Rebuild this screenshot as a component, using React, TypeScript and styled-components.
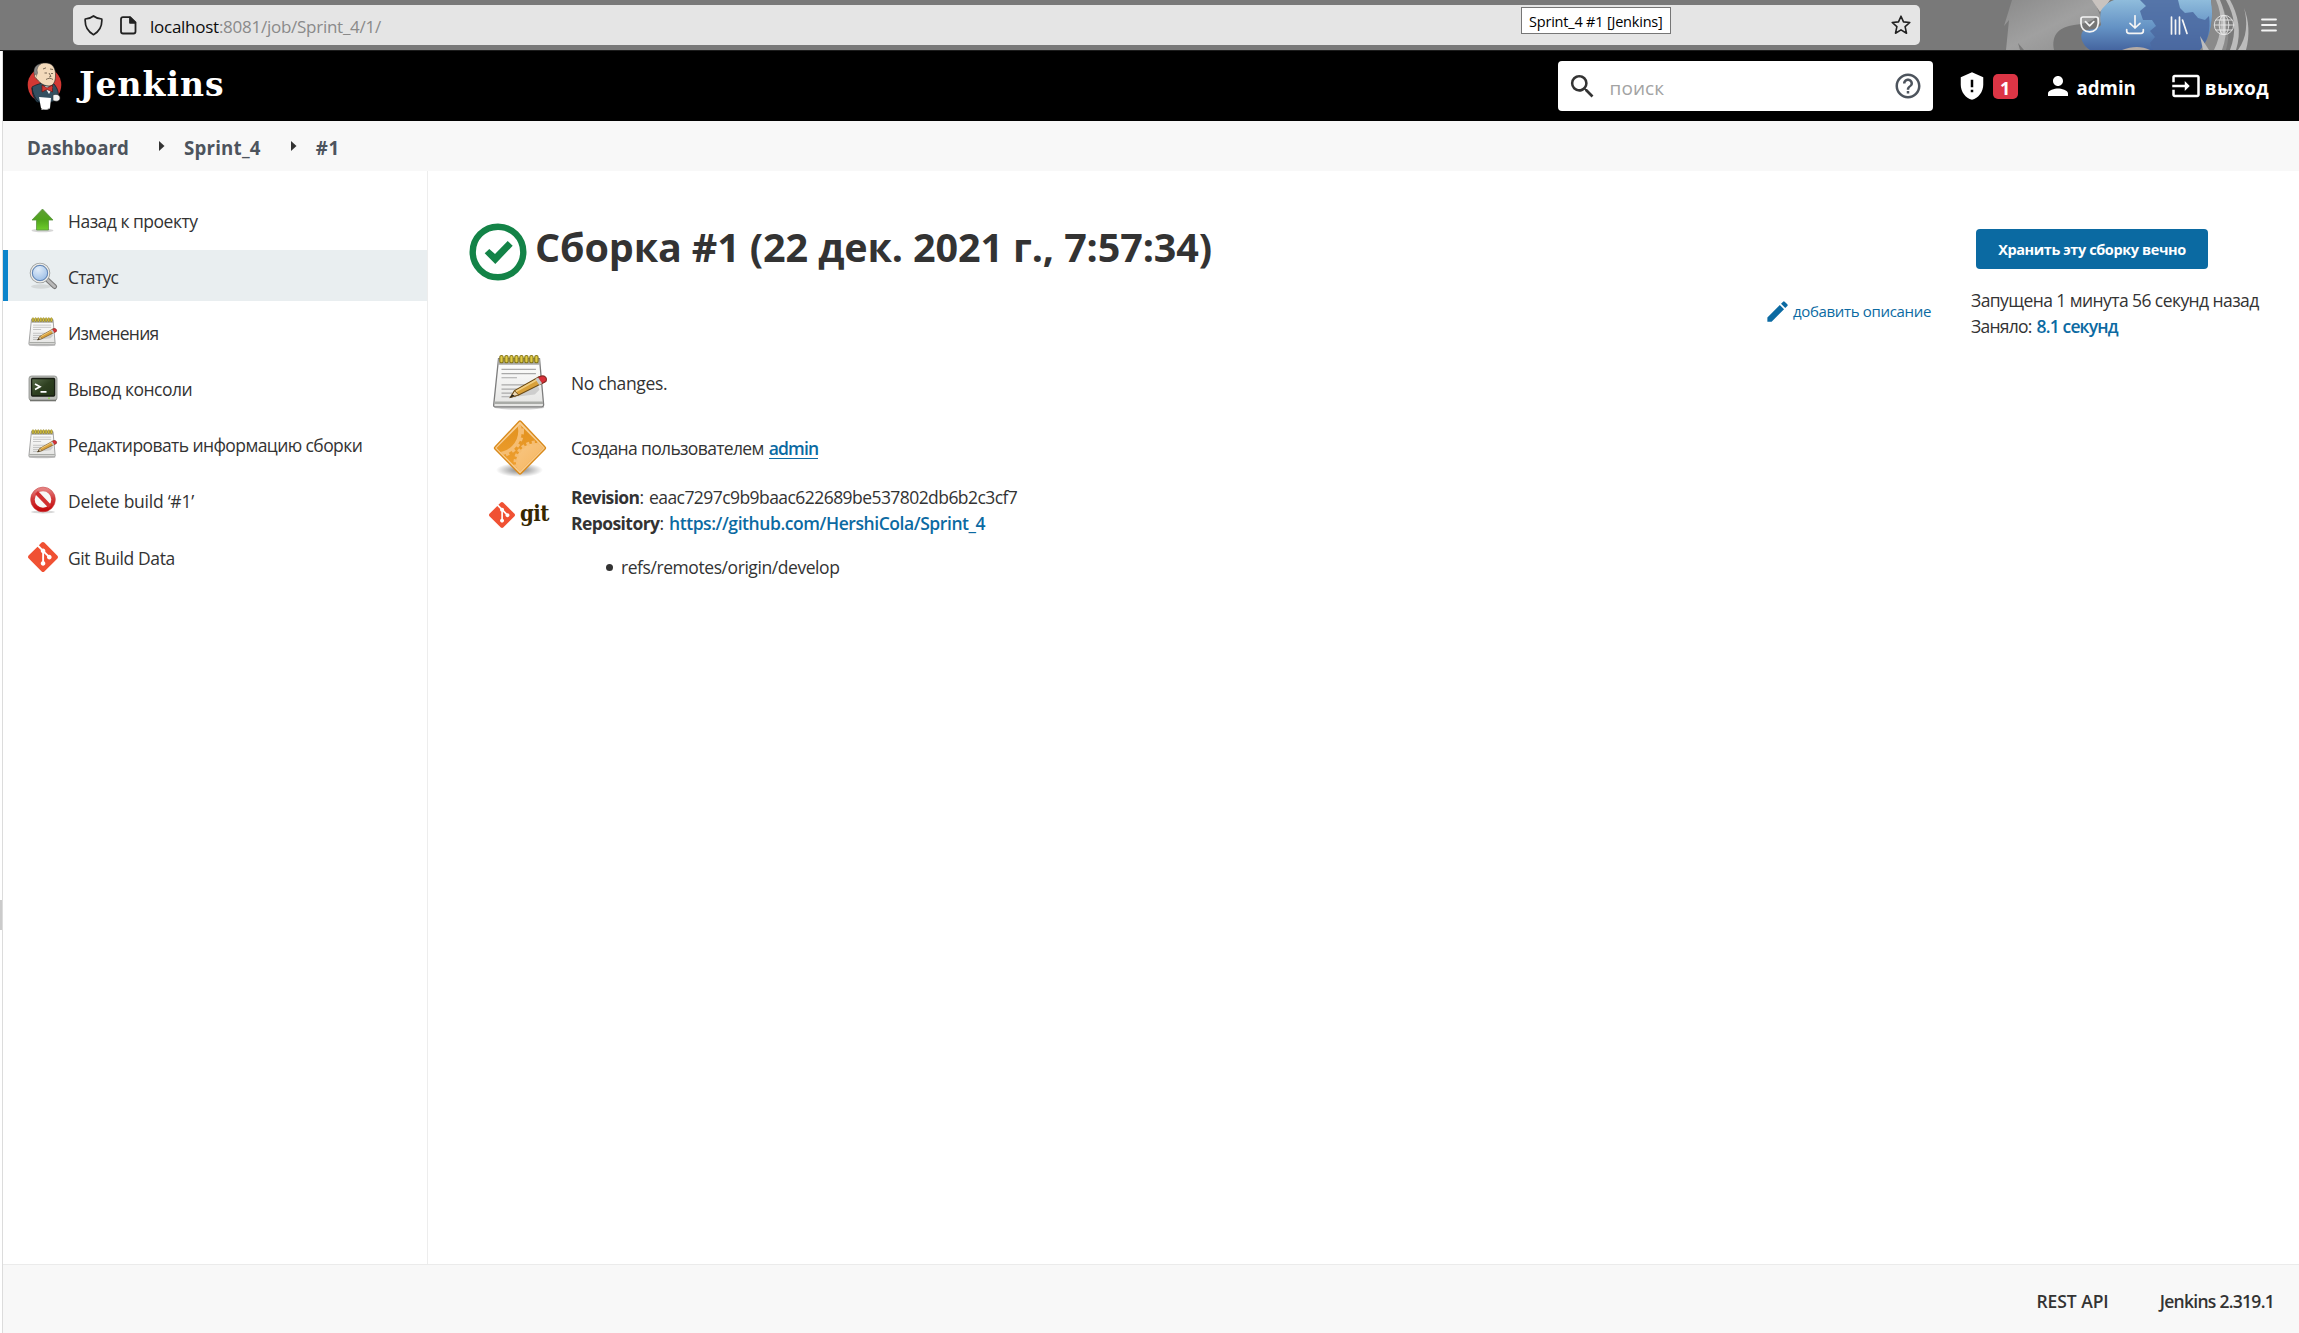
import React from "react";
import styled, { createGlobalStyle, css } from "styled-components";
import { SiGit } from "react-icons/si";

const Global = createGlobalStyle`
  *, *::before, *::after { box-sizing: border-box; }
  body {
    margin: 0;
    background: #fff;
    color: #333;
    font: 400 17.5px/26px "Open Sans", "Noto Sans", sans-serif;
  }
  svg { display: block; flex: none; }
`;

const Page = styled.div`
  width: 2299px;
  height: 1333px;
  display: flex;
  flex-direction: column;
  overflow: hidden;
`;

const Text = styled.span<{ $ls?: number }>`
  white-space: nowrap;
  letter-spacing: ${(p) => p.$ls ?? 0}px;
`;

/* ---------- browser chrome ---------- */

const Chrome = styled.header`
  position: relative;
  flex: none;
  height: 51px;
  display: flex;
  align-items: flex-start;
  padding: 5px 21px 0 73px;
  background: #797979;
  border-bottom: 1px solid #1c1c1c;
`;

const ThemeArt = styled.svg`
  position: absolute;
  left: 1990px;
  top: 0;
`;

const AddressBar = styled.div`
  width: 1847px;
  height: 40px;
  display: flex;
  align-items: center;
  padding: 0 9px 0 11px;
  background: #e5e5e5;
  border-radius: 5px;
`;

const Url = styled(Text)`
  margin: 4px auto 0 13px;
  font-size: 17px;
  color: #8a8a8a;
  b { font-weight: 400; color: #0c0c0d; }
`;

const PageIcon = styled.svg`
  margin-left: 17px;
`;

const Tooltip = styled.div`
  position: absolute;
  left: 1521px;
  top: 7px;
  width: 150px;
  height: 27px;
  display: flex;
  align-items: center;
  padding: 4px 0 2px 7px;
  background: #fff;
  border: 1px solid #767676;
  color: #000;
  font-size: 14.5px;
  line-height: 20px;
`;

const ChromeTools = styled.div`
  position: relative;
  margin-left: auto;
  height: 40px;
  display: flex;
  align-items: center;
  gap: 25px;
  color: #f4f4f4;
`;

/* ---------- Jenkins header ---------- */

const Body = styled.div`
  flex: 1;
  display: flex;
  min-height: 0;
`;

const WindowEdge = styled.div`
  flex: none;
  width: 3px;
  display: flex;
  border-right: 1px solid #dcdcdc;
  padding-top: 849px;
`;

const EdgeHandle = styled.div`
  width: 2px;
  height: 30px;
  background: #cbcbcb;
`;

const Jenkins = styled.div`
  flex: 1;
  display: flex;
  flex-direction: column;
  min-width: 0;
`;

const Header = styled.div`
  flex: none;
  height: 70px;
  display: flex;
  align-items: center;
  padding: 0 30px 0 24px;
  background: #000;
  color: #fff;
`;

const Wordmark = styled(Text)`
  margin: 0 auto 3px 17px;
  font: 700 33px/40px "DejaVu Serif", serif;
`;

const Search = styled.div`
  width: 375px;
  height: 50px;
  display: flex;
  align-items: center;
  padding: 0 10px 0 9px;
  background: #fff;
  border-radius: 4px;
`;

const Placeholder = styled(Text)`
  margin: 3px auto 0 12px;
  font-size: 19px;
  color: #a3a3a3;
`;

const Alerts = styled.div`
  display: flex;
  align-items: center;
  gap: 6px;
  margin: 0 25px 0 24px;
`;

const Badge = styled.span`
  width: 25px;
  height: 25px;
  margin-top: 1px;
  border-radius: 5px;
  background: #dc3545;
  font-weight: 700;
  font-size: 18px;
  line-height: 28px;
  text-align: center;
`;

const HeaderLink = styled.a<{ $gap: number }>`
  display: flex;
  align-items: center;
  gap: ${(p) => p.$gap}px;
  font-weight: 700;
  font-size: 18.7px;
  & + & { margin-left: 35px; }
  ${Text} { margin-top: 3px; }
`;

/* ---------- breadcrumbs ---------- */

const Breadcrumbs = styled.nav`
  flex: none;
  height: 50px;
  display: flex;
  align-items: center;
  padding: 0 0 0 24px;
  background: #f8f8f8;
  color: #4d545d;
  font-weight: 700;
  font-size: 18.7px;
  ${Text} { margin-top: 3px; }
`;

const Chevron = styled.svg`
  margin: 0 19px 0 30px;
`;

/* ---------- side panel ---------- */

const Middle = styled.div`
  flex: 1;
  display: flex;
  min-height: 0;
`;

const Side = styled.aside`
  flex: none;
  width: 425px;
  display: flex;
  flex-direction: column;
  gap: 5.2px;
  padding-top: 23px;
  border-right: 1px solid #ededed;
`;

const Task = styled.a<{ $active?: boolean }>`
  height: 51px;
  display: flex;
  align-items: center;
  gap: 10px;
  padding-left: 20px;
  border-left: 5px solid transparent;
  ${(p) => p.$active && css`
    background: #e9eef0;
    border-left-color: #0b84cb;
  `}
  ${Text} { margin-top: 2px; }
`;

/* ---------- main panel ---------- */

const Content = styled.main`
  flex: 1;
  padding: 52px 40px 0 41px;
`;

const Heading = styled.h1`
  height: 58px;
  display: flex;
  align-items: center;
  gap: 8px;
  margin: 0;
  font-weight: 700;
  font-size: 39.5px;
  line-height: 48px;
  ${Text} { margin-bottom: 11px; }
`;

const AddDescription = styled.a`
  height: 30px;
  display: flex;
  align-items: center;
  justify-content: flex-end;
  gap: 2px;
  margin: 15px 0 24px;
  color: #0b6aa2;
  font-size: 15px;
`;

const Summary = styled.div<{ $h?: number }>`
  display: flex;
  align-items: ${(p) => (p.$h ? "center" : "flex-start")};
  height: ${(p) => (p.$h ? `${p.$h}px` : "auto")};
  padding-left: 20px;
`;

const SummaryIcon = styled.div<{ $indent?: number; $h?: number }>`
  width: 63px;
  height: ${(p) => p.$h ?? 60}px;
  display: flex;
  align-items: center;
  padding-left: ${(p) => p.$indent ?? 0}px;
  margin-right: 19px;
`;

const GitWord = styled(Text)`
  margin: 0 0 4px 5px;
  font: 700 22px/26px "DejaVu Serif Condensed", "DejaVu Serif", serif;
  color: #362701;
`;

const Strong = styled(Text)`
  font-weight: 700;
`;

const Link = styled(Text)<{ $underline?: boolean }>`
  color: #0b6aa2;
  font-weight: 600;
  ${(p) => p.$underline && css`
    border-bottom: 1px solid #0b6aa2;
    display: inline-block;
    line-height: 20px;
  `}
`;

const Line = styled.div`
  display: flex;
  align-items: baseline;
  gap: 5px;
`;

const BuildData = styled.div`
  margin-top: 3px;
`;

const Refs = styled.ul`
  margin: 18px 0 0;
  padding: 0 0 0 35px;
  list-style: none;
`;

const Ref = styled.li`
  display: flex;
  align-items: center;
  gap: 8px;
  &::before {
    content: "";
    width: 7px;
    height: 7px;
    margin-top: 1px;
    border-radius: 50%;
    background: #333;
  }
`;

const BuildInfo = styled.section`
  flex: none;
  width: 328px;
  padding-top: 58px;
`;

const KeepButton = styled.button`
  width: 232px;
  height: 40px;
  margin: 0 0 18px 5px;
  padding: 2px 0 0;
  border: 0;
  border-radius: 4px;
  background: #0b6aa2;
  color: #fff;
  font: 700 14.5px/20px "Open Sans", "Noto Sans", sans-serif;
`;

const Footer = styled.footer`
  flex: none;
  height: 69px;
  display: flex;
  align-items: center;
  justify-content: flex-end;
  gap: 51px;
  padding: 4px 25px 0 0;
  background: #f8f8f8;
  border-top: 1px solid #ebebeb;
  font-weight: 600;
`;

/* ---------- icons ---------- */

const Glyph = ({ d, size, color = "currentColor" }: { d: string; size: number; color?: string }) => (
  <svg width={size} height={size} viewBox="0 0 24 24" fill={color}><path d={d} /></svg>
);

const SEARCH = "M15.5 14h-.79l-.28-.27A6.471 6.471 0 0 0 16 9.5 6.5 6.5 0 1 0 9.5 16c1.61 0 3.09-.59 4.23-1.57l.27.28v.79l5 4.99L20.49 19l-4.99-5zm-6 0C7.01 14 5 11.99 5 9.5S7.01 5 9.5 5 14 7.01 14 9.5 11.99 14 9.5 14z";
const HELP = "M11 18h2v-2h-2v2zm1-16C6.48 2 2 6.48 2 12s4.48 10 10 10 10-4.48 10-10S17.52 2 12 2zm0 18c-4.41 0-8-3.59-8-8s3.59-8 8-8 8 3.59 8 8-3.59 8-8 8zm0-14c-2.21 0-4 1.79-4 4h2c0-1.1.9-2 2-2s2 .9 2 2c0 2-3 1.75-3 5h2c0-2.25 3-2.5 3-5 0-2.21-1.79-4-4-4z";
const SHIELD = "M12 1L3 5v6c0 5.55 3.84 10.74 9 12 5.16-1.26 9-6.45 9-12V5l-9-4zM11 7h2v6h-2V7zm0 8h2v2h-2v-2z";
const PERSON = "M12 12c2.21 0 4-1.79 4-4s-1.79-4-4-4-4 1.79-4 4 1.79 4 4 4zm0 2c-2.67 0-8 1.34-8 4v2h16v-2c0-2.66-5.33-4-8-4z";
const EXIT = "M21 3.01H3c-1.1 0-2 .9-2 2V9h2V4.99h18v14.03H3V15H1v4.01c0 1.1.9 1.98 2 1.98h18c1.1 0 2-.88 2-1.98v-14c0-1.11-.9-2-2-2zM11 16l4-4-4-4v3H1v2h10v3z";
const PENCIL = "M3 17.25V21h3.75L17.81 9.94l-3.75-3.75L3 17.25zM20.71 7.04a1 1 0 0 0 0-1.41l-2.34-2.34a1 1 0 0 0-1.41 0l-1.83 1.83 3.75 3.75 1.83-1.83z";

const FirefoxTheme = () => (
  <ThemeArt width="280" height="50" viewBox="0 0 280 50">
    <defs>
      <linearGradient id="globe" x1="0" y1="0" x2="0" y2="1">
        <stop offset="0" stopColor="#8fbcdc" /><stop offset=".55" stopColor="#6492c4" /><stop offset="1" stopColor="#4565a0" />
      </linearGradient>
      <linearGradient id="fur" x1="0" y1="0" x2="1" y2="1">
        <stop offset="0" stopColor="#8b8b8b" /><stop offset=".5" stopColor="#a0a0a0" /><stop offset="1" stopColor="#8e8e8e" />
      </linearGradient>
    </defs>
    <path d="M22 0 L14 26 L19 20 L16 50 H30 L28 43 L34 50 H92 L112 20 L104 0 Z" fill="url(#fur)" />
    <path d="M64 50 C61 34 70 27 84 25 C94 24 102 22 106 17 L110 26 L94 50 Z" fill="#767676" />
    <path d="M102 0 H120 C116 6 113 9 110 12 Z" fill="#c9c3bf" />
    <path d="M111 25 C110 17 110 12 112 9 C116 4 120 1 124 0 H221 C224 18 221 38 212 50 H100 C92 45 89 36 93 31 C98 29 108 30 111 25 Z" fill="url(#globe)" />
    <path d="M150 0 H188 L190 8 L195 13 L203 12 L208 18 L215 20 L219 16 C221 30 217 42 211 50 H163 L160 43 L165 37 L160 31 L166 26 L162 20 L153 20 L150 11 L156 6 Z" fill="#4b69a0" opacity=".85" />
    <path d="M132 50 C142 46 152 46 160 50 Z" fill="#b4aaa4" />
    <path d="M221 0 H229 C238 14 241 34 236 50 H210 C221 38 224 18 221 0 Z" fill="#8a8a8a" />
    <path d="M226 0 C233 16 232 34 224 50 H232 C239 32 236 14 230 0 Z M210 36 L213 50 H219 Z M236 0 C245 16 247 32 240 50 H246 C252 32 248 14 240 0 Z M254 8 C258 22 257 38 248 50 H256 C260 36 259 20 254 8 Z" fill="#bcbcbc" />
  </ThemeArt>
);

const stroke = { fill: "none", stroke: "currentColor", strokeLinecap: "round" as const, strokeLinejoin: "round" as const };

const Butler = () => (
  <svg width="35" height="48" viewBox="0 0 35 48">
    <ellipse cx="17.5" cy="23" rx="16.8" ry="17.5" fill="#d33833" />
    <path d="M5 25 C8 23 12 22 15 21 L27 22 C31 27 32 31 31 37 L24 40 L10 40 C6 35 5 31 5 25 Z" fill="#335061" stroke="#15222b" strokeWidth=".8" />
    <path d="M5 26 C6 32 8 37 13 41" stroke="#15222b" strokeWidth="1" fill="none" />
    <path d="M17 24 L22 32 L26 25 Z" fill="#f5f5f5" />
    <path d="M8 7 C10 2 15 .5 20 1 C26 1.5 29 7 28.500 14 C28.500 20 26 24 22 24 C16 24 12 20 9 16 Z" fill="#f3dabb" stroke="#222" strokeWidth=".6" />
    <path d="M14 1.700 C9 2.500 6.500 6 7 11 C7.300 13 8 14 9 15 L10.500 11 L10 8 C10.500 5 12 3 14 1.700 Z" fill="#8b8a88" stroke="#333" strokeWidth=".4" />
    <path d="M9 12 C7 12 7 16 10 17" fill="#f3dabb" stroke="#443a30" strokeWidth=".6" />
    <path d="M16 7 l3 -1.200 M23 7 l3 .5 M17.500 11 h2.500 M24 11.500 h2 M22 11 l2 3.500 l-2 .5 M19 17.500 c2 -1.500 5 -1.500 7 0" stroke="#5b4c3c" strokeWidth=".8" fill="none" />
    <path d="M15 23 L20 26 L25.500 23 V30 L20 27.500 L15 30 Z" fill="#d33833" stroke="#5e1512" strokeWidth=".7" />
    <path d="M12 35 L24 36 L23 46 C20 48.500 16 48 14 46 Z" fill="#fff" />
    <path d="M14 47 C17 48.500 20 48 23 46" stroke="#aaa" strokeWidth="1" fill="none" />
    <path d="M26 33 C30 31.500 33 33 33 36 C33 39 30 40 26 38.500 Z" fill="#f4f4f4" stroke="#333" strokeWidth=".6" />
  </svg>
);

const Notepad = ({ size }: { size: number }) => (
  <svg width={size} height={size} viewBox="0 0 48 48">
    <defs>
      <linearGradient id="paper" x1="0" y1="0" x2="0" y2="1">
        <stop offset="0" stopColor="#ffffff" /><stop offset="1" stopColor="#e4e4e2" />
      </linearGradient>
    </defs>
    <ellipse cx="23" cy="45" rx="21" ry="1.800" fill="#cfcfcf" />
    <path d="M5.500 4 H40 L43.500 43 Q43.500 44.500 42 44.500 H2.500 Q1.300 44.500 1.400 43 Z" fill="url(#paper)" stroke="#7d7d7d" strokeWidth="1.100" />
    <path d="M5.500 4 H40 L40.500 9 H5 Z" fill="#a8a8a6" />
    <path d="M2 41 H43" stroke="#a9aba7" strokeWidth="2" />
    {[0, 1, 2, 3, 4, 5, 6, 7].map((i) => (
      <rect key={i} x={6.6 + i * 4.2} y="1.200" width="2.800" height="6.200" rx="1.400" fill="#e0cb45" stroke="#857513" strokeWidth=".9" />
    ))}
    <path d="M8 13 H37 M8 16.500 H37 M8 20 H21 M8 26 H33 M8 29.500 H28 M8 33 H22 M8 36 H20" stroke="#a9a9a9" strokeWidth="1" />
    <path d="M20 36 L36 34 L40 30 L38 25 Z" fill="#b9b9b9" opacity=".6" />
    <path d="M15.500 36.500 L19 31 L40 19 C43 18 45.500 20.500 44.500 23.500 L22.500 34.500 Z" fill="#d9a13b" stroke="#6b4a16" strokeWidth="1" />
    <path d="M20 31.500 L40 20.500" stroke="#f1cf84" strokeWidth="1.400" />
    <path d="M15.500 36.500 L19 31 L22.500 34.500 Z" fill="#ecd9b5" stroke="#6b4a16" strokeWidth=".8" />
    <path d="M15 37 L17 34 L19 35 Z" fill="#222" />
    <path d="M38.500 20 L41 18.800 C44 17.500 46.800 20 45.500 23 L42 24.800 Z" fill="#d9303a" stroke="#8a2b26" strokeWidth=".9" />
    <path d="M36.500 21 L38.800 19.800 L42.200 24.700 L39.700 26 Z" fill="#c9c9c9" />
  </svg>
);

const UpArrow = () => (
  <svg width="30" height="30" viewBox="0 0 30 30">
    <defs>
      <linearGradient id="up" x1="0" y1="0" x2="0" y2="1">
        <stop offset="0" stopColor="#5f9e34" /><stop offset=".5" stopColor="#4fa31c" /><stop offset="1" stopColor="#6fce2c" />
      </linearGradient>
    </defs>
    <ellipse cx="14.500" cy="25.500" rx="11" ry="1.800" fill="#d6d6d6" />
    <path d="M14.500 4 L25 15 H20.500 V25 H8.500 V15 H4 Z" fill="url(#up)" stroke="#5c9440" strokeWidth=".8" strokeLinejoin="round" />
  </svg>
);

const Magnifier = () => (
  <svg width="30" height="30" viewBox="0 0 30 30">
    <defs>
      <radialGradient id="lens" cx=".4" cy=".3" r=".8">
        <stop offset="0" stopColor="#e3eefa" /><stop offset="1" stopColor="#8db4e2" />
      </radialGradient>
    </defs>
    <ellipse cx="13" cy="25.500" rx="10" ry="2.200" fill="#d4d8d9" />
    <path d="M18.500 18 L26.500 25.500" stroke="#777" strokeWidth="5" strokeLinecap="round" />
    <path d="M18.500 18 L26.500 25.500" stroke="#b9b9b9" strokeWidth="3" strokeLinecap="round" />
    <circle cx="12" cy="12" r="9" fill="url(#lens)" stroke="#9a9d9c" strokeWidth="2.600" />
    <circle cx="12" cy="12" r="8.800" fill="none" stroke="#eeeeec" strokeWidth="1.200" />
    <circle cx="12" cy="12" r="7.600" fill="none" stroke="#5f86bb" strokeWidth="1" />
  </svg>
);

const Terminal = () => (
  <svg width="30" height="30" viewBox="0 0 30 30">
    <defs>
      <linearGradient id="screen" x1="0" y1="0" x2="1" y2="1">
        <stop offset="0" stopColor="#5c6f4f" /><stop offset=".5" stopColor="#2e4020" /><stop offset="1" stopColor="#243518" />
      </linearGradient>
    </defs>
    <rect x="1" y="3" width="28" height="24.500" rx="2.500" fill="#bcbeb9" stroke="#8c8e8a" strokeWidth=".8" />
    <path d="M2 27.500 H28" stroke="#72746f" strokeWidth="1.600" />
    <rect x="3.600" y="5.500" width="23" height="17.500" rx="1" fill="url(#screen)" stroke="#171c12" strokeWidth="1.300" />
    <path d="M7 11 L12 13.800 L7 16.500 M12.500 18.800 H18.500" stroke="#fff" strokeWidth="1.700" fill="none" />
    <circle cx="21" cy="25.200" r=".9" fill="#93d24e" />
  </svg>
);

const NoEntry = () => (
  <svg width="30" height="30" viewBox="0 0 30 30">
    <defs>
      <linearGradient id="stop" x1="0" y1="0" x2="0" y2="1">
        <stop offset="0" stopColor="#e58080" /><stop offset=".45" stopColor="#d23a3a" /><stop offset="1" stopColor="#c40a0e" />
      </linearGradient>
    </defs>
    <ellipse cx="15" cy="27" rx="12" ry="1.400" fill="#d8d8d8" />
    <circle cx="15" cy="14.500" r="10.300" fill="#f7f7f7" stroke="url(#stop)" strokeWidth="4" />
    <path d="M8.500 7.500 L21.800 21.300" stroke="#d12f30" strokeWidth="4" />
    <circle cx="15" cy="14.500" r="12.400" fill="none" stroke="#c43a3a" strokeWidth=".6" />
  </svg>
);

const GearDiamond = () => (
  <svg width="56" height="58" viewBox="0 0 56 58">
    <defs>
      <linearGradient id="amber" x1="0" y1="0" x2="0" y2="1">
        <stop offset="0" stopColor="#e2921f" /><stop offset="1" stopColor="#f0a030" />
      </linearGradient>
      <linearGradient id="gear" x1="0" y1="0" x2="1" y2="1">
        <stop offset="0" stopColor="#f8c682" /><stop offset="1" stopColor="#f4ae50" />
      </linearGradient>
      <radialGradient id="shade">
        <stop offset="0" stopColor="#000" stopOpacity=".5" /><stop offset="1" stopColor="#000" stopOpacity="0" />
      </radialGradient>
      <clipPath id="sign"><path d="M29 5.500 L52.500 29 L29 52.500 L5.500 29 Z" /></clipPath>
    </defs>
    <ellipse cx="28.500" cy="51" rx="23.500" ry="7" fill="url(#shade)" />
    <path d="M28 2.500 Q29 1.500 30 2.500 L54 28 Q55 29 54 30 L30 54.500 Q29 55.500 28 54.500 L4 30 Q3 29 4 28 Z" fill="#f8cf95" stroke="#d98a1c" strokeWidth="1.400" />
    <path d="M29 5.500 L52.500 29 L29 52.500 L5.500 29 Z" fill="url(#amber)" />
    <g clipPath="url(#sign)">
      <circle cx="45" cy="44" r="20" fill="url(#gear)" />
      <circle cx="45" cy="44" r="20.500" fill="none" stroke="#f5bd72" strokeWidth="4" strokeDasharray="3 2.400" />
      <circle cx="6" cy="12" r="23" fill="none" stroke="#f5bd72" strokeWidth="3.500" />
      <circle cx="6" cy="12" r="25.500" fill="none" stroke="#f5bd72" strokeWidth="3" strokeDasharray="3.400 3.400" />
    </g>
  </svg>
);

/* ---------- page ---------- */

const tasks: { label: string; ls: number; icon: React.ReactNode; active?: boolean }[] = [
  { label: "Назад к проекту", ls: -0.5, icon: <UpArrow /> },
  { label: "Статус", ls: -0.7, icon: <Magnifier />, active: true },
  { label: "Изменения", ls: -0.75, icon: <Notepad size={30} /> },
  { label: "Вывод консоли", ls: -0.5, icon: <Terminal /> },
  { label: "Редактировать информацию сборки", ls: -0.59, icon: <Notepad size={30} /> },
  { label: "Delete build ‘#1’", ls: -0.25, icon: <NoEntry /> },
  { label: "Git Build Data", ls: -0.4, icon: <SiGit size={30} color="#f05133" /> },
];

const Separator = () => (
  <Chevron width="6" height="10" viewBox="0 0 6 10"><path d="M0 0 L5.500 5 L0 10 Z" fill="#333" /></Chevron>
);

export default function App() {
  return (
    <Page>
      <Global />
      <Chrome>
        <FirefoxTheme />
        <AddressBar>
          <svg width="19" height="21" viewBox="0 0 19 21" {...stroke} stroke="#222" strokeWidth="1.700">
            <path d="M9.500 1 C12 3 14.800 3.900 17.800 4 C18.300 11.500 15.500 16.500 9.500 19.700 C3.500 16.500 .7 11.500 1.200 4 C4.200 3.900 7 3 9.500 1 Z" />
          </svg>
          <PageIcon width="17" height="19" viewBox="0 0 17 19" {...stroke} stroke="#222" strokeWidth="1.800">
            <path d="M3 1.200 H10 L15.500 6.500 V15.500 Q15.500 17.500 13.500 17.500 H3 Q1 17.500 1 15.500 V3.200 Q1 1.200 3 1.200 Z" />
            <path d="M10 1.500 V6.800 H15.300 Z" fill="#222" />
          </PageIcon>
          <Url $ls={-0.26}><b>localhost</b>:8081/job/Sprint_4/1/</Url>
          <svg width="20" height="20" viewBox="0 0 20 20" {...stroke} stroke="#222" strokeWidth="1.600">
            <path d="M10 1.200 L12.500 6.900 L18.800 7.500 L14.100 11.700 L15.500 18.200 L10 14.900 L4.500 18.200 L5.900 11.700 L1.200 7.500 L7.500 6.900 Z" />
          </svg>
        </AddressBar>
        <Tooltip><Text $ls={-0.2}>Sprint_4 #1 [Jenkins]</Text></Tooltip>
        <ChromeTools>
          <svg width="20" height="18" viewBox="0 0 20 18" {...stroke} strokeWidth="1.700">
            <path d="M3 1 H16 Q18.200 1 18.200 3 V7.500 Q17.500 15.500 9.600 15.800 Q1.500 15.500 1 7.500 V3 Q1 1 3 1 Z M5.500 5.700 L9.600 9.800 L13.800 5.700" />
          </svg>
          <svg width="20" height="20" viewBox="0 0 20 20" {...stroke} strokeWidth="1.700">
            <path d="M10 .8 V13 M5 8.300 L10 13 L15 8.300 M1.700 14.500 V16 Q1.700 18.300 4 18.300 H16 Q18.300 18.300 18.300 16 V14.500" />
          </svg>
          <svg width="18" height="19" viewBox="0 0 18 19" {...stroke} strokeWidth="1.700">
            <path d="M1.500 1 V18 M5.500 4 V18 M9.500 1 V18 M12.500 4 L17 17.500" />
          </svg>
          <svg width="22" height="22" viewBox="0 0 22 22" {...stroke} strokeWidth="1" opacity=".8">
            <circle cx="11" cy="11" r="9.700" />
            <ellipse cx="11" cy="11" rx="4.800" ry="9.700" />
            <path d="M11 1.300 V20.700 M1.300 11 H20.700 M3 6 H19 M3 16 H19" />
          </svg>
          <svg width="18" height="16" viewBox="0 0 18 16" {...stroke} strokeWidth="1.800">
            <path d="M2 2.500 H16 M2 8 H16 M2 13.500 H16" />
          </svg>
        </ChromeTools>
      </Chrome>

      <Body>
        <WindowEdge><EdgeHandle /></WindowEdge>
        <Jenkins>
          <Header>
            <Butler />
            <Wordmark $ls={1}>Jenkins</Wordmark>
            <Search>
              <Glyph d={SEARCH} size={31} color="#333" />
              <Placeholder $ls={0.05}>поиск</Placeholder>
              <Glyph d={HELP} size={30} color="#4d545d" />
            </Search>
            <Alerts>
              <Glyph d={SHIELD} size={30} />
              <Badge>1</Badge>
            </Alerts>
            <HeaderLink $gap={4}><Glyph d={PERSON} size={30} /><Text $ls={-0.05}>admin</Text></HeaderLink>
            <HeaderLink $gap={4}><Glyph d={EXIT} size={30} /><Text $ls={0.35}>выход</Text></HeaderLink>
          </Header>

          <Breadcrumbs>
            <Text $ls={0.02}>Dashboard</Text>
            <Separator />
            <Text $ls={0.22}>Sprint_4</Text>
            <Separator />
            <Text $ls={0.6}>#1</Text>
          </Breadcrumbs>

          <Middle>
            <Side>
              {tasks.map((t) => (
                <Task key={t.label} $active={t.active}>{t.icon}<Text $ls={t.ls}>{t.label}</Text></Task>
              ))}
            </Side>

            <Content>
              <Heading>
                <svg width="58" height="58" viewBox="-29 -29 58 58">
                  <circle r="25.300" fill="none" stroke="#138347" strokeWidth="6.400" />
                  <path d="M-13.300 1.300 L-8.700 -3 L-3 2 L9.700 -11 L14.700 -6.300 L-2.700 12 Z" fill="#138347" />
                </svg>
                <Text $ls={-0.13}>Сборка #1 (22 дек. 2021 г., 7:57:34)</Text>
              </Heading>

              <AddDescription>
                <Glyph d={PENCIL} size={27} />
                <Text $ls={-0.33}>добавить описание</Text>
              </AddDescription>

              <Summary $h={65}>
                <SummaryIcon $indent={3} $h={62}><Notepad size={57} /></SummaryIcon>
                <Text $ls={-0.36}>No changes.</Text>
              </Summary>
              <Summary $h={66}>
                <SummaryIcon $indent={2}><GearDiamond /></SummaryIcon>
                <Line>
                  <Text $ls={-0.65}>Создана пользователем</Text>
                  <Link $ls={-0.85} $underline>admin</Link>
                </Line>
              </Summary>
              <Summary>
                <SummaryIcon $h={67}>
                  <SiGit size={26} color="#f05133" />
                  <GitWord $ls={-0.6}>git</GitWord>
                </SummaryIcon>
                <BuildData>
                  <Line>
                    <Text><Strong $ls={-0.65}>Revision</Strong>:</Text>
                    <Text $ls={-0.56}>eaac7297c9b9baac622689be537802db6b2c3cf7</Text>
                  </Line>
                  <Line>
                    <Text><Strong $ls={-0.58}>Repository</Strong>:</Text>
                    <Link $ls={-0.43}>https://github.com/HershiCola/Sprint_4</Link>
                  </Line>
                  <Refs>
                    <Ref><Text $ls={-0.43}>refs/remotes/origin/develop</Text></Ref>
                  </Refs>
                </BuildData>
              </Summary>
            </Content>

            <BuildInfo>
              <KeepButton><Text $ls={-0.4}>Хранить эту сборку вечно</Text></KeepButton>
              <Line><Text $ls={-0.57}>Запущена 1 минута 56 секунд назад</Text></Line>
              <Line><Text $ls={-0.75}>Заняло:</Text><Link $ls={-0.85}>8.1 секунд</Link></Line>
            </BuildInfo>
          </Middle>

          <Footer>
            <Text $ls={-0.06}>REST API</Text>
            <Text $ls={-0.72}>Jenkins 2.319.1</Text>
          </Footer>
        </Jenkins>
      </Body>
    </Page>
  );
}
